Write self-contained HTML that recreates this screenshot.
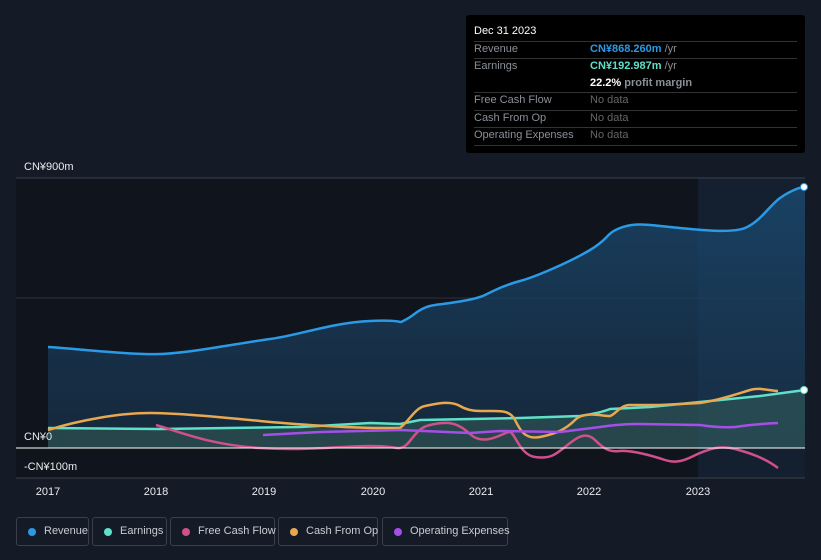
<!DOCTYPE html>
<html><head><style>
body{margin:0;width:821px;height:560px;background:#151b26;font-family:"Liberation Sans",sans-serif;overflow:hidden;position:relative}
.tt{position:absolute;left:466px;top:15px;width:339px;height:138px;background:#000;border-radius:3px;font-size:11px;color:#8a8f98}
.tt .r{position:absolute;left:8px;right:8px;border-top:1px solid #333}
.tt span{position:absolute;white-space:nowrap}
.lg{position:absolute;top:517px;height:29px;border:1px solid #3a404b;border-radius:3px;color:#c8ccd3;font-size:11px;line-height:27px;box-sizing:border-box;white-space:nowrap}
.lg i{position:absolute;left:11px;top:10px;width:8px;height:8px;border-radius:50%}
.lg b{font-weight:normal;position:absolute;left:27px}
</style></head><body>
<svg width="821" height="560" style="position:absolute;left:0;top:0">
<defs><linearGradient id="g" x1="0" y1="0" x2="0" y2="1"><stop offset="0" stop-color="#1a4a70" stop-opacity=".8"/><stop offset="1" stop-color="#1a3550" stop-opacity=".6"/></linearGradient></defs>
<rect x="16" y="178" width="682" height="300" fill="#10141c"/>
<rect x="698" y="178" width="107" height="300" fill="#142030"/>
<line x1="16" y1="178" x2="805" y2="178" stroke="#3a404b"/>
<line x1="16" y1="298" x2="805" y2="298" stroke="#2a303b"/>
<line x1="16" y1="478" x2="805" y2="478" stroke="#3a404b"/>
<path d="M48,347 C80,349 130,355 160,354 S240,343 270,339 S330,323 370,321 S395,325 405,320 S420,307 435,305 S475,300 485,295 S505,285 520,281 S570,262 590,250 S605,234 620,228 S650,225 670,227 S730,234 745,228 S770,205 780,198 S800,187 805,187 L805,448 L48,448Z" fill="url(#g)"/>
<path d="M48,347 C80,349 130,355 160,354 S240,343 270,339 S330,323 370,321 S395,325 405,320 S420,307 435,305 S475,300 485,295 S505,285 520,281 S570,262 590,250 S605,234 620,228 S650,225 670,227 S730,234 745,228 S770,205 780,198 S800,187 805,187" fill="none" stroke="#2b9ae6" stroke-width="2.5"/>
<path d="M48,428 L160,429 L300,427 L370,423 L400,424 L420,420 L520,418 L580,416 Q600,413 610,409 L650,407 L700,402 L760,396 Q790,392 805,390 L805,448 L48,448Z" fill="#3a6a60" opacity=".45"/>
<path d="M48,428 L160,429 L300,427 L370,423 L400,424 L420,420 L520,418 L580,416 Q600,413 610,409 L650,407 L700,402 L760,396 Q790,392 805,390" fill="none" stroke="#5fe0c8" stroke-width="2.5"/>
<path d="M48,430 C80,420 120,413 150,413 S230,418 260,421 S350,428 380,428 L400,428 C410,420 415,408 425,406 S450,400 460,406 S480,411 490,411 S510,410 515,420 S525,440 540,437 S565,430 575,420 S605,417 610,416 S620,405 630,405 L660,405 L700,403 C720,400 740,393 750,390 S770,391 778,391" fill="none" stroke="#e8a850" stroke-width="2.5"/>
<path d="M156,425 C180,432 210,445 260,448 S340,446 370,446 S395,450 403,447 S415,428 430,425 S455,420 470,434 S505,431 510,432 S520,455 535,457 S555,455 565,447 S585,430 595,440 S610,452 620,451 S650,455 665,460 S690,457 700,453 S720,445 735,449 S765,458 778,468" fill="none" stroke="#d0508a" stroke-width="2.5"/>
<path d="M263,435 L320,432 L400,430 L470,433 L500,431 L560,432 L600,427 Q620,424 640,424 L700,425 Q720,428 735,427 Q755,424 778,423" fill="none" stroke="#a64ee8" stroke-width="2.5"/>
<line x1="16" y1="448" x2="805" y2="448" stroke="#fff" stroke-width="1"/>
<circle cx="804" cy="187" r="3.5" fill="#fff" stroke="#2b9ae6"/>
<circle cx="804" cy="390" r="3.5" fill="#fff" stroke="#5fe0c8"/>
<g fill="#e8ebef" font-size="11" font-family="Liberation Sans">
<text x="24" y="170">CN¥900m</text><text x="24" y="440">CN¥0</text><text x="24" y="470">-CN¥100m</text>
<g text-anchor="middle"><text x="48" y="495">2017</text><text x="156" y="495">2018</text><text x="264" y="495">2019</text><text x="373" y="495">2020</text><text x="481" y="495">2021</text><text x="589" y="495">2022</text><text x="698" y="495">2023</text></g>
</g>
</svg>
<div class="tt">
<span style="left:8px;top:10px;color:#fff">Dec 31 2023</span>
<div class="r" style="top:26px"></div>
<span style="left:8px;top:28px">Revenue</span><span style="left:124px;top:28px;color:#2b9ae6;font-weight:bold">CN¥868.260m <span style="position:static;color:#8a8f98;font-weight:normal">/yr</span></span>
<div class="r" style="top:43px"></div>
<span style="left:8px;top:45px">Earnings</span><span style="left:124px;top:45px;color:#5fe0c8;font-weight:bold">CN¥192.987m <span style="position:static;color:#8a8f98;font-weight:normal">/yr</span></span>
<span style="left:124px;top:62px;color:#fff;font-weight:bold">22.2% <span style="position:static;color:#8a8f98">profit margin</span></span>
<div class="r" style="top:77px"></div>
<span style="left:8px;top:79px">Free Cash Flow</span><span style="left:124px;top:79px;color:#666">No data</span>
<div class="r" style="top:95px"></div>
<span style="left:8px;top:97px">Cash From Op</span><span style="left:124px;top:97px;color:#666">No data</span>
<div class="r" style="top:112px"></div>
<span style="left:8px;top:114px">Operating Expenses</span><span style="left:124px;top:114px;color:#666">No data</span>
<div class="r" style="top:130px"></div>
</div>
<div class="lg" style="left:16px;width:73px"><i style="background:#2b9ae6"></i><b>Revenue</b></div>
<div class="lg" style="left:92px;width:75px"><i style="background:#5fe0c8"></i><b>Earnings</b></div>
<div class="lg" style="left:170px;width:105px"><i style="background:#d0508a"></i><b>Free Cash Flow</b></div>
<div class="lg" style="left:278px;width:100px"><i style="background:#e8a850"></i><b>Cash From Op</b></div>
<div class="lg" style="left:382px;width:126px"><i style="background:#a64ee8"></i><b>Operating Expenses</b></div>
</body></html>
